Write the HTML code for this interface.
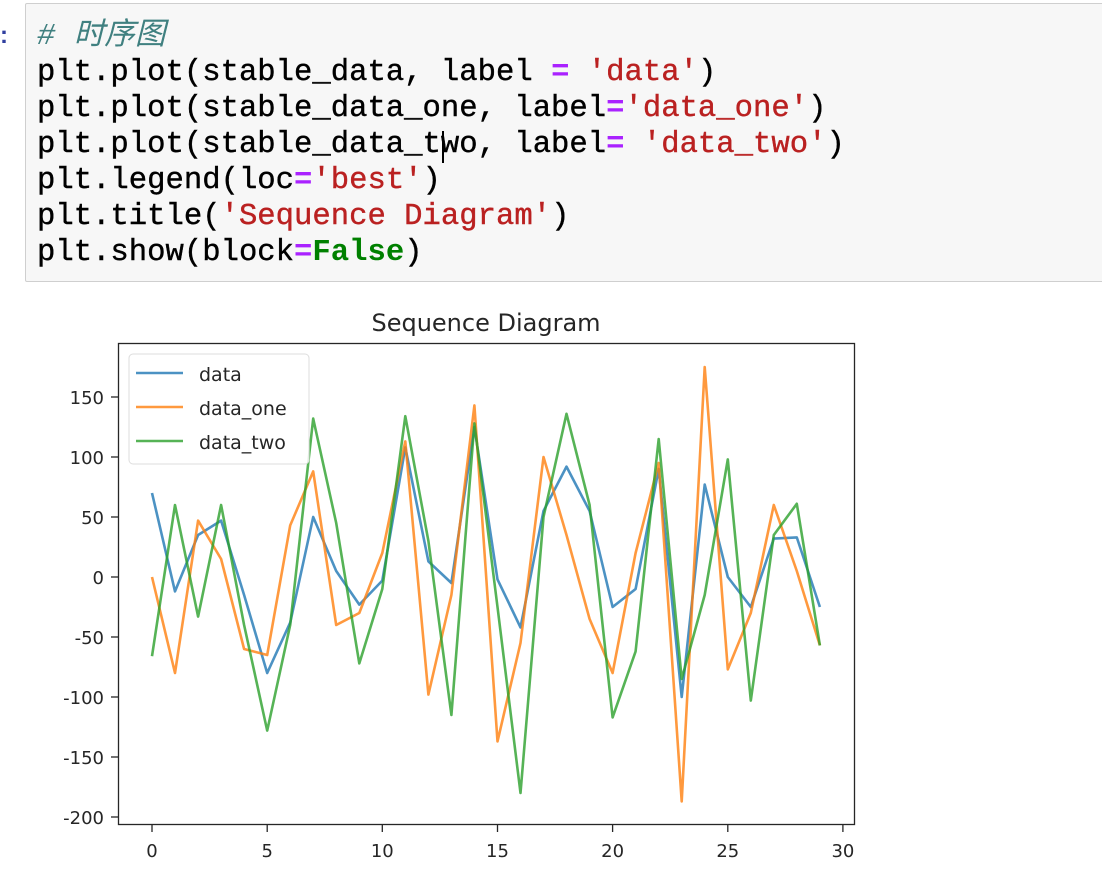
<!DOCTYPE html>
<html><head><meta charset="utf-8"><style>
html,body{margin:0;padding:0;background:#fff;width:1102px;height:894px;overflow:hidden}
.cell{position:absolute;left:25px;top:3px;width:1100px;height:277px;background:#f7f7f7;border:1px solid #cfcfcf;border-radius:2px}
.code{position:absolute;left:37px;top:19px;margin:0;font-family:"Liberation Mono",monospace;font-size:30.6px;line-height:36px;color:#000;white-space:pre;-webkit-text-stroke:0.4px #000}
.c{color:#408080;font-style:italic;font-family:"Liberation Mono","Noto Sans CJK SC",monospace;-webkit-text-stroke:0}
.s{color:#ba2121;-webkit-text-stroke:0.4px #ba2121}
.o{color:#aa22ff;font-weight:bold;-webkit-text-stroke:0}
.k{color:#008000;font-weight:bold;-webkit-text-stroke:0}
.p{position:absolute;left:0;top:22px;width:6px;height:20px;color:#303f9f;font:bold 24px "Liberation Sans",sans-serif}
</style></head><body>
<div class="p">:</div>
<div class="cell"></div>
<pre class="code"><span class="c"># 时序图</span>
plt.plot(stable_data, label <span class="o">=</span> <span class="s">'data'</span>)
plt.plot(stable_data_one, label<span class="o">=</span><span class="s">'data_one'</span>)
plt.plot(stable_data_two, label<span class="o">=</span> <span class="s">'data_two'</span>)
plt.legend(loc<span class="o">=</span><span class="s">'best'</span>)
plt.title(<span class="s">'Sequence Diagram'</span>)
plt.show(block<span class="o">=</span><span class="k">False</span>)</pre>
<div style="position:absolute;left:442px;top:131px;width:1.5px;height:32px;background:#000"></div>
<svg width="1102" height="894" style="position:absolute;left:0;top:0" font-family="DejaVu Sans, Liberation Sans, sans-serif">
<text x="486" y="331" font-size="24" text-anchor="middle" fill="#262626">Sequence Diagram</text>
<g fill="none" stroke-width="2.6" stroke-linejoin="round">
<polyline stroke="#1f77b4" stroke-opacity="0.8" points="152,493 175,591.4 198.1,535 221.1,520.6 244.1,595 267.2,673 290.2,622.6 313.2,517 336.2,571 359.3,604.6 382.3,580.6 405.3,447.4 428.4,561.4 451.4,583 474.4,427 497.5,579.4 520.5,627.4 543.5,511 566.5,466.6 589.6,511 612.6,607 635.6,589 658.7,469 681.7,697 704.7,484.6 727.8,577 750.8,607 773.8,538.6 796.8,537.4 819.9,607"/>
<polyline stroke="#ff7f0e" stroke-opacity="0.8" points="152,577 175,673 198.1,520.6 221.1,559 244.1,649 267.2,655 290.2,525.4 313.2,471.4 336.2,625 359.3,613 382.3,553 405.3,441.4 428.4,694.6 451.4,595 474.4,405.4 497.5,741.4 520.5,643 543.5,457 566.5,535 589.6,619 612.6,673 635.6,553 658.7,463 681.7,801.4 704.7,367 727.8,669.4 750.8,613 773.8,505 796.8,571 819.9,645.4"/>
<polyline stroke="#2ca02c" stroke-opacity="0.8" points="152,656.2 175,505 198.1,616.6 221.1,505 244.1,625 267.2,730.6 290.2,625 313.2,418.6 336.2,523 359.3,663.4 382.3,589 405.3,416.2 428.4,541 451.4,715 474.4,423.4 497.5,607 520.5,793 543.5,517 566.5,413.8 589.6,505 612.6,717.4 635.6,651.4 658.7,439 681.7,679 704.7,595 727.8,459.4 750.8,700.6 773.8,535 796.8,503.8 819.9,645.4"/>
</g>
<rect x="118.5" y="343.5" width="736" height="481" fill="none" stroke="#262626" stroke-width="1.3"/>
<rect x="129" y="354" width="180" height="110" rx="4" fill="#fff" fill-opacity="0.85" stroke="#dddddd"/>
<g stroke-width="2.6" stroke-opacity="0.8">
<line x1="136" y1="373" x2="183" y2="373" stroke="#1f77b4"/>
<line x1="136" y1="407" x2="183" y2="407" stroke="#ff7f0e"/>
<line x1="136" y1="441" x2="183" y2="441" stroke="#2ca02c"/>
</g>
<g font-size="19" fill="#262626">
<text x="199" y="381">data</text>
<text x="199" y="415">data_one</text>
<text x="199" y="449">data_two</text>
</g>
<g stroke="#262626" stroke-width="1.3">
<line x1="111" y1="397" x2="118" y2="397"/><line x1="111" y1="457" x2="118" y2="457"/><line x1="111" y1="517" x2="118" y2="517"/><line x1="111" y1="577" x2="118" y2="577"/><line x1="111" y1="637" x2="118" y2="637"/><line x1="111" y1="697" x2="118" y2="697"/><line x1="111" y1="757" x2="118" y2="757"/><line x1="111" y1="817" x2="118" y2="817"/>
<line x1="152" y1="825" x2="152" y2="832"/><line x1="267.2" y1="825" x2="267.2" y2="832"/><line x1="382.3" y1="825" x2="382.3" y2="832"/><line x1="497.5" y1="825" x2="497.5" y2="832"/><line x1="612.6" y1="825" x2="612.6" y2="832"/><line x1="727.8" y1="825" x2="727.8" y2="832"/><line x1="842.9" y1="825" x2="842.9" y2="832"/>
</g>
<g font-size="18" fill="#262626" text-anchor="end">
<text x="104" y="404">150</text><text x="104" y="464">100</text><text x="104" y="524">50</text><text x="104" y="584">0</text><text x="104" y="644">-50</text><text x="104" y="704">-100</text><text x="104" y="764">-150</text><text x="104" y="824">-200</text>
</g>
<g font-size="18" fill="#262626" text-anchor="middle">
<text x="152" y="857">0</text><text x="267.2" y="857">5</text><text x="382.3" y="857">10</text><text x="497.5" y="857">15</text><text x="612.6" y="857">20</text><text x="727.8" y="857">25</text><text x="842.9" y="857">30</text>
</g>
</svg>
</body></html>
